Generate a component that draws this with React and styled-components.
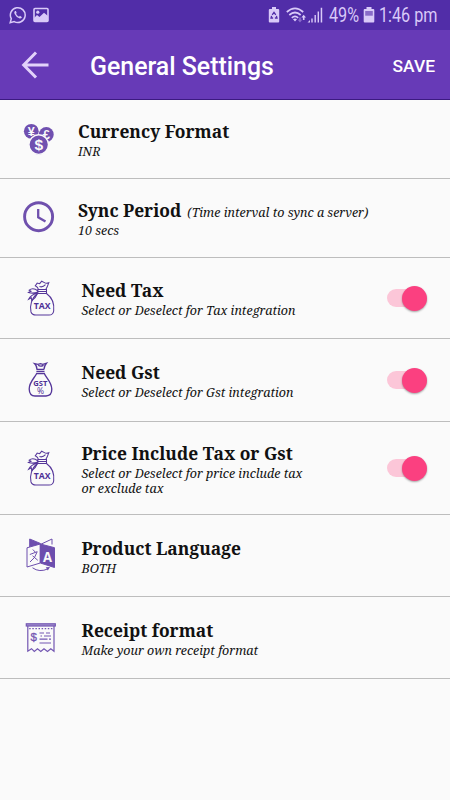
import React, { useState } from "react";
import styled, { createGlobalStyle } from "styled-components";

const GlobalStyle = createGlobalStyle`
  * {
    box-sizing: border-box;
  }
  body {
    margin: 0;
    background: #fafafa;
  }
`;

const Screen = styled.div`
  display: flex;
  flex-direction: column;
  width: 450px;
  height: 800px;
  overflow: hidden;
  background: #fafafa;
`;

const StatusBar = styled.div`
  display: flex;
  align-items: center;
  flex: none;
  height: 30px;
  padding: 0 12px 0 9px;
  background: #512da8;
`;

const StatusGroup = styled.div`
  display: flex;
  align-items: center;
  height: 100%;
  gap: ${(props) => props.$gap || 0}px;
  margin-left: ${(props) => (props.$end ? "auto" : "0")};
`;

const StatusText = styled.span`
  width: ${(props) => props.$width}px;
  margin-left: ${(props) => props.$left}px;
  padding-top: 2px;
  white-space: nowrap;
  font-family: Roboto, sans-serif;
  font-size: 19.5px;
  line-height: 28px;
  color: #d9caf8;
  transform: scaleX(0.83);
  transform-origin: left;
`;

const Toolbar = styled.header`
  display: flex;
  align-items: center;
  flex: none;
  height: 70px;
  padding: 1px 15px 0 21px;
  background: #673ab7;
  border-bottom: 1px solid #3c1a80;
  font-family: Roboto, sans-serif;
  color: #fff;
`;

const BackButton = styled.button`
  display: flex;
  padding: 0;
  border: 0;
  background: none;
`;

const PageTitle = styled.h1`
  flex: 1;
  margin: 4px 0 0 41px;
  font-size: 24.9px;
  font-weight: 500;
  line-height: 30px;
`;

const SaveButton = styled.button`
  padding: 1px 0 0;
  border: 0;
  background: none;
  font-family: Roboto, sans-serif;
  font-size: 17.4px;
  font-weight: 500;
  color: #fff;
`;

const Row = styled.div`
  display: flex;
  flex: none;
  height: ${(props) => props.$height}px;
  padding-right: 21px;
  border-bottom: 1px solid #bdbdbd;
`;

const RowIcon = styled.div`
  flex: none;
  width: ${(props) => props.$width}px;
  padding: ${(props) => props.$top}px 0 0 20px;

  svg {
    display: block;
  }
`;

const RowBody = styled.div`
  flex: 1;
  padding-top: ${(props) => props.$top}px;
`;

const RowTitle = styled.div`
  display: flex;
  align-items: center;
  gap: 6px;
  padding-bottom: 2px;
  white-space: nowrap;
  font-family: "Noto Serif", "Droid Serif", serif;
  font-size: 17.4px;
  font-weight: bold;
  line-height: 22px;
  color: #111;
`;

const Hint = styled.span`
  font-family: "Noto Serif", "Droid Serif", serif;
  font-size: 12.5px;
  font-style: italic;
  font-weight: normal;
  line-height: 15px;
  color: #111;
`;

const TitleHint = styled(Hint)`
  padding-top: 4px;
`;

const Description = styled(Hint)`
  display: block;
  white-space: pre-line;
`;

const SwitchTrack = styled.button`
  align-self: center;
  display: flex;
  align-items: center;
  justify-content: ${(props) => (props.$on ? "flex-end" : "flex-start")};
  width: 38px;
  height: 18px;
  margin: 0 4px 0 0;
  padding: 0;
  border: 0;
  border-radius: 9px;
  background: ${(props) => (props.$on ? "#fcc6d8" : "#bbb")};
`;

const SwitchThumb = styled.span`
  flex: none;
  width: 25px;
  height: 25px;
  margin: 0 -2px 0 0;
  border-radius: 50%;
  background: ${(props) => (props.$on ? "#fb4080" : "#f1f1f1")};
  box-shadow: 0 1px 2px rgba(0, 0, 0, 0.35);
`;

const WhatsappIcon = () => (
  <svg width="18" height="18" viewBox="0 0 18 18" fill="none" stroke="#d9caf8">
    <path d="M1.2 16.7 2.3 12.7A7.4 7.4 0 1 1 5.2 15.6Z" strokeWidth="1.5" />
    <path
      d="M6 5Q4.7 6.1 5.6 7.9 7.4 11.5 10.7 12.6 12.2 12.7 13 11.2L11 9.8 10 10.8Q8 10 7 7.8L7.7 7 6.9 4.9Z"
      fill="#d9caf8"
      stroke="none"
    />
  </svg>
);

const ImageIcon = () => (
  <svg width="16" height="16" viewBox="0 0 16 16">
    <rect x="1" y="1.5" width="14" height="13" rx="1" fill="none" stroke="#d9caf8" strokeWidth="1.6" />
    <circle cx="4.8" cy="5.2" r="1.6" fill="#d9caf8" />
    <path d="M1 11 4 8 6.5 10 11 5.7 15 9V14H1Z" fill="#d9caf8" />
  </svg>
);

const SaverIcon = () => (
  <svg width="12" height="16" viewBox="0 0 12 16">
    <path d="M4 0H8V2H10.2Q11.2 2 11.2 3V14.5Q11.2 15.5 10.2 15.5H1.8Q.8 15.5.8 14.5V3Q.8 2 1.8 2H4Z" fill="#d9caf8" />
    <path d="M4.2 7.8 6 5.4 7.8 7.8M8.4 8.8 9 11H6.9M5.1 11H3L3.6 8.8" fill="none" stroke="#512da8" strokeWidth="1.3" />
  </svg>
);

const WifiIcon = () => (
  <svg width="21" height="17" viewBox="0 0 21 17">
    <g fill="none" stroke="#d9caf8" strokeWidth="1.7">
      <path d="M.8 5Q9 -2.2 17.2 5" />
      <path d="M3.3 8Q9 3 14.7 8" />
      <path d="M5.8 10.8Q9 8 12.2 10.8" />
    </g>
    <path d="M7 12.2Q9 10.8 11 12.2L9 14.6Z" fill="#d9caf8" />
    <path d="M17.7 7.8 20 10.6H18.5V13H16.9V10.6H15.4Z" fill="#d9caf8" />
    <path d="M14 15.5 11.8 12.8H13.2V10.5H14.8V12.8H16.2Z" fill="#8a6bcb" />
  </svg>
);

const SignalIcon = () => (
  <svg width="16" height="16" viewBox="0 0 16 16" fill="#d9caf8">
    <path d="M.5 15.5 3 13V15.5ZM4.3 11.5H5.7V15.5H4.3ZM7.5 8H8.9V15.5H7.5ZM10.6 4.5H12V15.5H10.6ZM13.7.8H15.2V15.5H13.7Z" />
  </svg>
);

const BatteryIcon = () => (
  <svg width="12" height="16" viewBox="0 0 12 16">
    <path d="M3.5 0H8.5V2H10.3Q11.3 2 11.3 3V14.5Q11.3 15.5 10.3 15.5H1.7Q.7 15.5.7 14.5V3Q.7 2 1.7 2H3.5Z" fill="#d9caf8" />
    <path d="M2.2 4H9.8V8.7H2.2Z" fill="#896bc8" />
  </svg>
);

const BackIcon = () => (
  <svg width="28" height="28" viewBox="0 0 28 28" fill="none" stroke="#e2d2fa" strokeWidth="3">
    <path d="M27.5 14H3M15 1.5 2.7 14 15 26.5" />
  </svg>
);

const CurrencyIcon = () => (
  <svg width="36" height="36" viewBox="0 0 36 36" fontFamily="Liberation Sans, sans-serif" fontWeight="bold" textAnchor="middle">
    <circle cx="11.3" cy="11.3" r="7.4" fill="#7050b0" />
    <text x="11.3" y="15.8" fontSize="12.5" fill="#fafafa">¥</text>
    <circle cx="26.3" cy="14.5" r="7.4" fill="#7050b0" />
    <text x="26.3" y="19" fontSize="13" fill="#fafafa">£</text>
    <circle cx="18.7" cy="24.6" r="9.8" fill="#7050b0" stroke="#fafafa" strokeWidth="1.4" />
    <text x="18.7" y="30" fontSize="15.5" fill="#fafafa">$</text>
  </svg>
);

const ClockIcon = () => (
  <svg width="36" height="36" viewBox="0 0 36 36" fill="none" stroke="#6f50ad">
    <circle cx="18.6" cy="17.7" r="14" strokeWidth="2.9" />
    <path d="M18.2 10V18.3L25.5 22.6" strokeWidth="2.3" />
  </svg>
);

const TaxIcon = () => (
  <svg width="40" height="40" viewBox="0 0 40 40" fill="none" stroke="#55369a" strokeWidth="1.05">
    <path d="M17.5 14.5C11.5 19 9.5 27 11 33Q12.3 36.5 17 36H28Q33 36.5 33.7 32C34.5 25 32 18.5 26.5 14.5Z" />
    <path d="M17.8 14.5V10.5H26.5V14.5M18 12.4H26.5M18.5 10.5Q18 8 15.3 6.7L17.2 4.1 19.7 4.7 21.7 2.2 24.4 3.6Q26.3 4.8 28.8 3.7 27.5 7.8 25.8 10.5M19.5 7.5Q22.5 8.8 25.5 5.6" />
    <path d="M18 12Q13 8 9.2 11.2L11 12.2 8.5 13.5Q13 15 18 13M17.7 14Q11 15.5 8.6 20.2L11.3 18.8 11.8 21.5Q16 18.5 17.7 14" />
    <text x="22.2" y="30" textAnchor="middle" fontFamily="Open Sans, sans-serif" fontSize="9.2" fontWeight="bold" fill="#4e3096" stroke="none" textLength="16.8" lengthAdjust="spacingAndGlyphs">TAX</text>
  </svg>
);

const GstIcon = () => (
  <svg width="40" height="40" viewBox="0 0 40 40" fill="none" stroke="#55369a" strokeWidth="1.35">
    <path d="M16.7 13.5C14.5 18 9.2 22 9.2 29Q9.4 36 15 36H26Q31.9 35.8 31.8 29C31.5 22 26.5 18.5 24.3 13.5Z" />
    <path d="M16.4 9.4H24.3M16.4 11.4H24.5M17 9.2Q16.8 5.6 14.7 3.7L18 4.3 20.5 3.7 22.8 4.3 26.4 3.3Q24.2 6 24 9.2M18.2 5.2Q20.5 7.2 23.5 5.1" />
    <text x="20.4" y="26" textAnchor="middle" fontFamily="Open Sans, sans-serif" fontSize="7.6" fontWeight="bold" fill="#4e3096" stroke="none">GST</text>
    <text x="20.6" y="34.2" textAnchor="middle" fontFamily="Open Sans, sans-serif" fontSize="8.5" fill="#4e3096" stroke="none">%</text>
  </svg>
);

const LanguageIcon = () => (
  <svg width="40" height="40" viewBox="0 0 40 40" fill="none" stroke="#6d4eae" strokeWidth="1">
    <path d="M20.3 9.5 32 4V9.5" />
    <path d="M9.7 4 20.3 8.4V10L9.7 12Z" fill="#6d4eae" />
    <path d="M7 12.8 20.3 9V28L7 32Z" fill="#fafafa" />
    <path d="M20.3 9 34.5 12.7V32.5L20.3 28Z" fill="#6d4eae" />
    <path d="M12.8 14.5 15.2 17M9.8 19.5 17.2 16.7Q15.5 23 10 27M12.5 20.8 17.8 25.3" />
    <text x="27.6" y="26.5" textAnchor="middle" fontFamily="Open Sans, sans-serif" fontSize="15" fontWeight="bold" fill="#fafafa" stroke="none" textLength="9" lengthAdjust="spacingAndGlyphs">A</text>
    <path d="M12.5 32.8Q19.5 37.8 28 33.8" />
    <path d="M25.8 32.2 30 32 27.8 35.6Z" fill="#6d4eae" stroke="none" />
  </svg>
);

const ReceiptIcon = () => (
  <svg width="40" height="40" viewBox="0 0 40 40" fill="none" stroke="#7356b2" strokeWidth="1.2">
    <rect x="6.3" y="3.8" width="29" height="2.2" fill="#a594d0" />
    <path d="M7.8 6V31.2L11.5 28.7 14.3 31.5 17.5 28.7 20.8 31.5 24 28.7 27.5 31.5 30.8 28.7 34 31.2V6" />
    <path d="M9.2 8.7H33" strokeDasharray="1.5 1.6" />
    <path d="M19.5 13H24M26 13H30M20.5 16H22M24 16H31M19.5 19.2H27.5M29 19.2H31M19.5 23H31" />
    <text x="13.7" y="21.3" textAnchor="middle" fontFamily="Liberation Sans, sans-serif" fontSize="11.5" fill="#7356b2" strokeWidth=".3">$</text>
  </svg>
);

const settings = [
  { title: "Currency Format", text: "INR", icon: CurrencyIcon, height: 79, iconTop: 20, top: 20, iconWidth: 78 },
  {
    title: "Sync Period",
    hint: "(Time interval to sync a server)",
    text: "10 secs",
    icon: ClockIcon,
    height: 79,
    iconTop: 20,
    top: 20,
    iconWidth: 78,
  },
  { title: "Need Tax", text: "Select or Deselect for Tax integration", icon: TaxIcon, height: 81, iconTop: 21, top: 21, toggle: "tax" },
  { title: "Need Gst", text: "Select or Deselect for Gst integration", icon: GstIcon, height: 83, iconTop: 21, top: 22, toggle: "gst" },
  {
    title: "Price Include Tax or Gst",
    text: "Select or Deselect for price include tax\nor exclude tax",
    icon: TaxIcon,
    height: 93,
    iconTop: 27,
    top: 20,
    toggle: "price",
  },
  { title: "Product Language", text: "BOTH", icon: LanguageIcon, height: 82, iconTop: 20, top: 22 },
  { title: "Receipt format", text: "Make your own receipt format", icon: ReceiptIcon, height: 82, iconTop: 23, top: 22 },
];

const App = () => {
  const [enabled, setEnabled] = useState({ tax: true, gst: true, price: true });

  const toggleSetting = (key) => {
    setEnabled({ ...enabled, [key]: !enabled[key] });
  };

  return (
    <Screen>
      <GlobalStyle />
      <StatusBar>
        <StatusGroup $gap={6}>
          <WhatsappIcon />
          <ImageIcon />
        </StatusGroup>
        <StatusGroup $end>
          <StatusGroup $gap={6}>
            <SaverIcon />
            <WifiIcon />
          </StatusGroup>
          <SignalIcon />
          <StatusText $width={29} $left={6}>49%</StatusText>
          <StatusGroup $gap={5}>
            <span />
            <BatteryIcon />
          </StatusGroup>
          <StatusText $width={59} $left={4}>1:46 pm</StatusText>
        </StatusGroup>
      </StatusBar>
      <Toolbar>
        <BackButton>
          <BackIcon />
        </BackButton>
        <PageTitle>General Settings</PageTitle>
        <SaveButton>SAVE</SaveButton>
      </Toolbar>
      {settings.map(({ icon: Icon, ...item }) => (
        <Row key={item.title} $height={item.height}>
          <RowIcon $width={item.iconWidth || 81.5} $top={item.iconTop}>
            <Icon />
          </RowIcon>
          <RowBody $top={item.top}>
            <RowTitle>
              {item.title}
              {item.hint && <TitleHint>{item.hint}</TitleHint>}
            </RowTitle>
            <Description>{item.text}</Description>
          </RowBody>
          {item.toggle && (
            <SwitchTrack $on={enabled[item.toggle]} onClick={() => toggleSetting(item.toggle)}>
              <SwitchThumb $on={enabled[item.toggle]} />
            </SwitchTrack>
          )}
        </Row>
      ))}
    </Screen>
  );
};

export default App;
